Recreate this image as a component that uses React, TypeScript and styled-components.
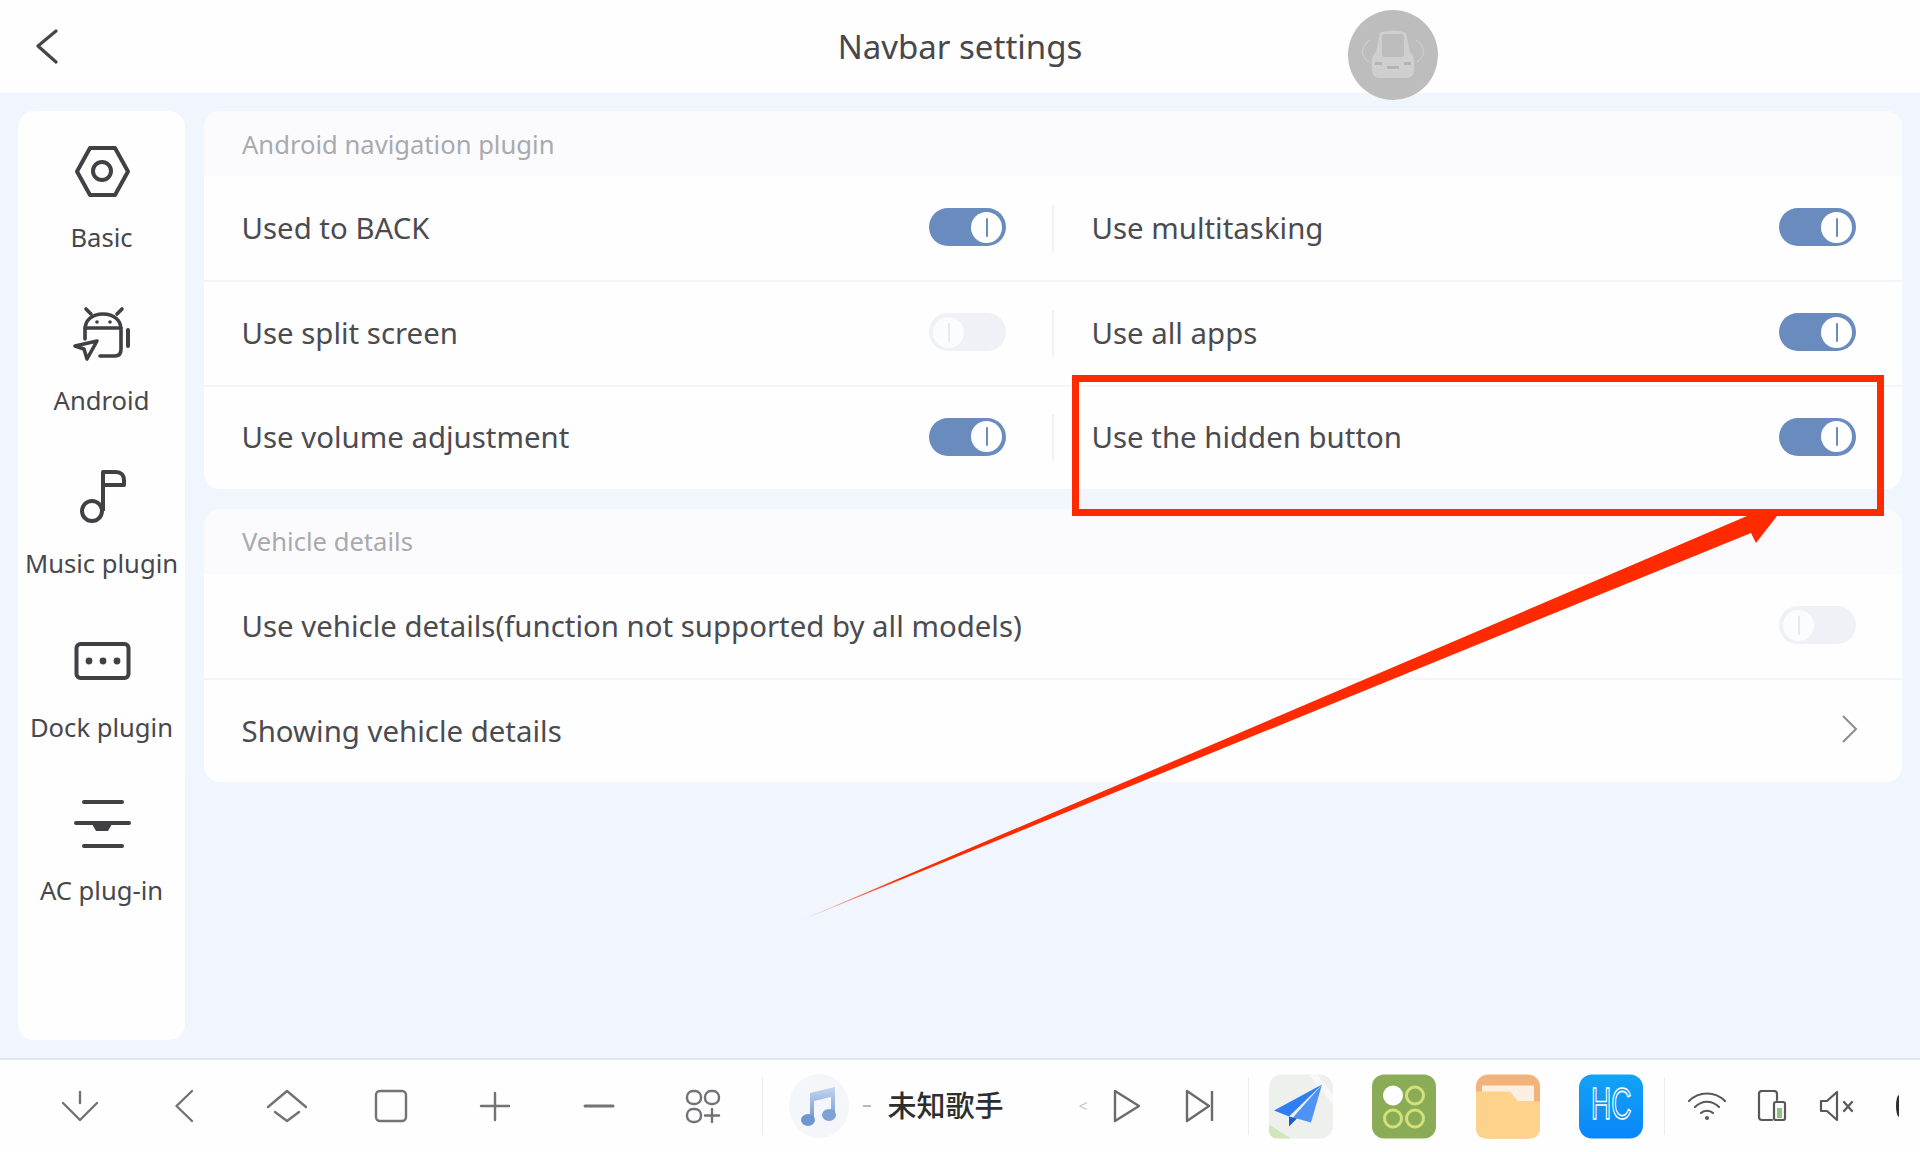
import React from "react";
import styled, { createGlobalStyle } from "styled-components";

const GlobalStyle = createGlobalStyle`
  html, body {
    margin: 0;
    padding: 0;
    background: #f1f5fd;
  }
  * {
    box-sizing: border-box;
  }
`;

const font = `"Noto Sans", "Noto Sans CJK SC", sans-serif`;

function BasicIcon() {
  return (
    <IconSvg viewBox="71 141 60 60">
      <path d="M76 171.5 L89 148 H114 L127 171.5 L114 195 H89 Z" fill="none" stroke="#404045" strokeWidth="4" strokeLinejoin="round" />
      <circle cx="101" cy="171" r="9" fill="none" stroke="#404045" strokeWidth="4" />
    </IconSvg>
  );
}

function AndroidIcon() {
  return (
    <IconSvg viewBox="71 305 60 60">
      <g fill="none" stroke="#404045" strokeWidth="3.6" strokeLinecap="round" strokeLinejoin="round">
        <path d="M84 340 V331 C84 321 91 315 102 315 C113 315 120 321 120 331 V350 C120 355 118 357 114 357 H99" />
        <path d="M84 329 H120" />
        <path d="M85 310 L90 315 M121 310 L116 315" />
        <path d="M127 331 V347" strokeWidth="4" />
        <path d="M74 347 L96 342 L86 360 L83 350 Z" />
      </g>
      <circle cx="96" cy="323" r="1.8" fill="#404045" />
      <circle cx="109" cy="323" r="1.8" fill="#404045" />
    </IconSvg>
  );
}

function MusicIcon() {
  return (
    <IconSvg viewBox="71 468 60 60">
      <g fill="none" stroke="#404045" strokeWidth="4" strokeLinejoin="round">
        <circle cx="91" cy="512" r="10" />
        <path d="M102 512 V473 H115 C120 473 123 476 123 481 V486 H102" />
      </g>
    </IconSvg>
  );
}

function DockIcon() {
  return (
    <IconSvg viewBox="71 631 60 60">
      <rect x="75.5" y="644" width="52" height="34" rx="4" fill="none" stroke="#404045" strokeWidth="4" />
      <circle cx="88" cy="661" r="3.4" fill="#404045" />
      <circle cx="102" cy="661" r="3.4" fill="#404045" />
      <circle cx="116" cy="661" r="3.4" fill="#404045" />
    </IconSvg>
  );
}

function AcIcon() {
  return (
    <IconSvg viewBox="71 794 60 60">
      <g stroke="#404045" strokeWidth="4" strokeLinecap="round">
        <path d="M83 802 H121" />
        <path d="M75 823 H128" />
        <path d="M83 846 H121" />
      </g>
      <path d="M91 824 H111 L107 831 H95 Z" fill="#404045" />
    </IconSvg>
  );
}

const menu = [
  { label: "Basic", icon: <BasicIcon /> },
  { label: "Android", icon: <AndroidIcon /> },
  { label: "Music plugin", icon: <MusicIcon /> },
  { label: "Dock plugin", icon: <DockIcon /> },
  { label: "AC plug-in", icon: <AcIcon /> },
];

const navIcons = [
  <path key="d" d="M20 6 V17 M3 17 L20 34 L37 17" />,
  <path key="b" d="M28 5 L12.5 20 L28 35" />,
  <path key="h" d="M1 21 L20 5 L39 21 M8 26 L20 35 L32 26" />,
  <rect key="r" x="5" y="5" width="30" height="30" rx="4" />,
  <path key="p" d="M6 20 H34 M20 7 V34" />,
  <path key="m" d="M6 20 H34" strokeWidth="3" />,
  <g key="g">
    <rect x="4" y="5" width="14" height="13" rx="6" />
    <rect x="22" y="5" width="14" height="13" rx="6" />
    <rect x="4" y="23" width="14" height="13" rx="6" />
    <path d="M22 29.5 H36 M29 23 V36" />
  </g>,
];

function Toggle({ on }: { on: boolean }) {
  return (
    <Track $on={on}>
      <Knob $on={on}>
        <KnobLine $on={on} />
      </Knob>
    </Track>
  );
}

export default function App() {
  return (
    <>
      <GlobalStyle />
      <Page>
        <Header>
          <BackButton viewBox="0 0 24 40">
            <path d="M22 3 L4 18 L22 34" fill="none" stroke="#45454a" strokeWidth="3.2" strokeLinecap="round" strokeLinejoin="round" />
          </BackButton>
          <Title>Navbar settings</Title>
          <span />
          <Avatar>
            <svg width="66" height="50" viewBox="0 0 66 50">
              <g fill="none" stroke="#cbcbcb" strokeWidth="1.5">
                <path d="M10 10 C0 17 0 26 9 32" />
                <path d="M56 10 C66 17 66 26 57 32" />
              </g>
              <path d="M20 3 C24 0 42 0 46 3 L50 22 C54 26 55 30 54 40 C54 46 50 48 46 48 H20 C16 48 12 46 12 40 C11 30 12 26 16 22 Z" fill="#cfcfcf" />
              <rect x="22" y="4" width="22" height="23" rx="2" fill="#bdbdbd" />
              <rect x="27" y="36" width="12" height="3" fill="#b4b4b4" />
              <rect x="15" y="32" width="7" height="3" fill="#b4b4b4" />
              <rect x="44" y="32" width="7" height="3" fill="#b4b4b4" />
            </svg>
          </Avatar>
        </Header>

        <Main>
          <Sidebar>
            {menu.map((m) => (
              <MenuItem key={m.label}>
                {m.icon}
                <MenuLabel>{m.label}</MenuLabel>
              </MenuItem>
            ))}
          </Sidebar>
          <Content>
            <Group>
              <GroupTitle>Android navigation plugin</GroupTitle>
              <Row>
                <Cell>
                  <RowText>Used to BACK</RowText>
                  <Toggle on />
                </Cell>
                <CellDivider />
                <Cell>
                  <RowText>Use multitasking</RowText>
                  <Toggle on />
                </Cell>
              </Row>
              <Row>
                <Cell>
                  <RowText>Use split screen</RowText>
                  <Toggle on={false} />
                </Cell>
                <CellDivider />
                <Cell>
                  <RowText>Use all apps</RowText>
                  <Toggle on />
                </Cell>
              </Row>
              <Row>
                <Cell>
                  <RowText>Use volume adjustment</RowText>
                  <Toggle on />
                </Cell>
                <CellDivider />
                <Cell>
                  <RowText>Use the hidden button</RowText>
                  <Toggle on />
                </Cell>
              </Row>
            </Group>
            <Group>
              <GroupTitle>Vehicle details</GroupTitle>
              <Row>
                <Cell>
                  <RowText>Use vehicle details(function not supported by all models)</RowText>
                  <Toggle on={false} />
                </Cell>
              </Row>
              <Row>
                <Cell>
                  <RowText>Showing vehicle details</RowText>
                  <RowChevron viewBox="0 0 24 32">
                    <path d="M7 2 L20 15 L7 28" />
                  </RowChevron>
                </Cell>
              </Row>
            </Group>
          </Content>
        </Main>

        <BottomBar>
          {navIcons.map((icon, i) => (
            <NavSlot key={i}>
              <NavSvg viewBox="0 0 40 40">{icon}</NavSvg>
            </NavSlot>
          ))}
          <NavEndDivider />
          <MusicSection>
            <MusicCover>
              <svg width="40" height="46" viewBox="0 0 40 42">
                <defs>
                  <linearGradient id="noteFill" x1="0" y1="0" x2="0" y2="1">
                    <stop offset="0" stopColor="#c3d6ee" />
                    <stop offset="1" stopColor="#6f97cf" />
                  </linearGradient>
                </defs>
                <path d="M11 8 L36 2 V30 H32 V12 L15 16 V36 H11 Z" fill="url(#noteFill)" />
                <ellipse cx="9" cy="35" rx="7" ry="6" fill="#6f97cf" />
                <ellipse cx="30" cy="30" rx="7" ry="6" fill="#7ea2d6" />
              </svg>
            </MusicCover>
            <Dash />
            <Artist>未知歌手</Artist>
            <FadedGlyph>&lt;</FadedGlyph>
            <PlayButton viewBox="0 0 32 40">
              <path d="M4 5 L28 20 L4 35 Z" />
            </PlayButton>
            <NextButton viewBox="0 0 32 40">
              <path d="M4 5 L26 20 L4 35 Z M29 5 V35" />
            </NextButton>
          </MusicSection>
          <BarDivider />
          <AppTray>
            <AppTile viewBox="0 0 64 64">
              <rect width="64" height="64" rx="13" fill="#eef0ed" />
              <path d="M0 50 L22 64 H8 C3 64 0 60 0 56 Z" fill="#cfe6bd" />
              <path d="M40 0 L64 30 V20 L48 0 Z" fill="#f8f8f8" />
              <path d="M53 10 L5 36 L20 42 Z" fill="#2f7ff0" />
              <path d="M53 10 L24 43 L42 48 Z" fill="#4f93f7" />
              <path d="M20 42 L20 52 L28 44 Z" fill="#1a5fc9" />
            </AppTile>
            <AppTile viewBox="0 0 64 64">
              <rect width="64" height="64" rx="12" fill="#8aac56" />
              <circle cx="21" cy="21" r="10" fill="#ffffff" />
              <circle cx="43" cy="21" r="8.5" fill="none" stroke="#d5e07a" strokeWidth="3" />
              <circle cx="21" cy="44" r="8.5" fill="none" stroke="#d5e07a" strokeWidth="3" />
              <circle cx="43" cy="44" r="8.5" fill="none" stroke="#d5e07a" strokeWidth="3" />
            </AppTile>
            <AppTile viewBox="0 0 64 64">
              <rect width="64" height="64" rx="12" fill="#f3b27a" />
              <path d="M6 11 H58 V27 H6 Z" fill="#fbeee2" />
              <path d="M0 17 H34 L42 27 H64 V54 C64 60 60 64 54 64 H10 C4 64 0 60 0 54 Z" fill="#fdd28a" />
            </AppTile>
            <AppTile viewBox="0 0 64 64">
              <defs>
                <linearGradient id="hcFill" x1="0" y1="0" x2="0" y2="1">
                  <stop offset="0" stopColor="#12a3f5" />
                  <stop offset="1" stopColor="#0a86fb" />
                </linearGradient>
              </defs>
              <rect width="64" height="64" rx="13" fill="url(#hcFill)" />
              <HcText x="12" y="28" transform="scale(1 1.6)">HC</HcText>
            </AppTile>
          </AppTray>
          <BarDivider />
          <StatusTray>
            <StatusSvg viewBox="0 0 40 32">
              <path d="M2 11 C12 1 28 1 38 11 M8 17 C15 10 25 10 32 17 M14 23 C17 20 23 20 26 23" />
              <circle cx="20" cy="28" r="2" fill="#58585c" stroke="none" />
            </StatusSvg>
            <StatusSvg viewBox="0 0 40 32">
              <path d="M20 30 H10 C8 30 7 29 7 27 V4 C7 2 8 1 10 1 H22 C24 1 25 2 25 4 V10" />
              <rect x="22" y="12" width="11" height="18" rx="2" />
              <rect x="25" y="18" width="5" height="10" fill="#8fc27a" stroke="none" />
            </StatusSvg>
            <StatusSvg viewBox="0 0 40 32">
              <path d="M4 11 H10 L20 2 V30 L10 21 H4 Z" />
              <path d="M27 12 L35 21 M35 12 L27 21" />
            </StatusSvg>
            <EdgeArc />
          </StatusTray>
        </BottomBar>

        <Highlight />
        <ArrowOverlay viewBox="0 0 1920 1152">
          <defs>
            <linearGradient id="arrowFade" gradientUnits="userSpaceOnUse" x1="797" y1="922" x2="900" y2="878">
              <stop offset="0" stopColor="#ff2a00" stopOpacity="0.1" />
              <stop offset="1" stopColor="#ff2a00" />
            </linearGradient>
          </defs>
          <path d="M797 922 L1747 516 H1777 L1756 543 L1751 533 Z" fill="url(#arrowFade)" />
        </ArrowOverlay>
      </Page>
    </>
  );
}

const Page = styled.div`
  position: relative;
  display: flex;
  flex-direction: column;
  width: 1920px;
  height: 1152px;
  overflow: hidden;
  background: #f1f5fd;
  font-family: ${font};
`;

const Header = styled.header`
  position: relative;
  display: grid;
  grid-template-columns: 1fr auto 1fr;
  align-items: center;
  height: 93px;
  padding-bottom: 2px;
  background: #fefefe;
`;

const BackButton = styled.svg`
  width: 24px;
  height: 40px;
  margin-left: 34px;
  margin-top: 4px;
`;

const Title = styled.h1`
  margin: 2px 0 0;
  font-size: 33px;
  font-weight: 400;
  color: #47474c;
`;

const Avatar = styled.div`
  position: absolute;
  left: 1348px;
  top: 10px;
  display: flex;
  align-items: center;
  justify-content: center;
  width: 90px;
  height: 90px;
  border-radius: 50%;
  background: #bdbdbd;
`;

const Main = styled.main`
  display: flex;
  flex: 1;
  gap: 19px;
  padding: 18px;
  min-height: 0;
`;

const Sidebar = styled.nav`
  flex: 0 0 167px;
  border-radius: 16px;
  background: #fefefe;
`;

const MenuItem = styled.div`
  display: flex;
  flex-direction: column;
  align-items: center;
  height: 163.2px;
  padding-top: 30px;
`;

const IconSvg = styled.svg`
  display: block;
  flex: 0 0 60px;
  width: 60px;
  height: 60px;
`;

const MenuLabel = styled.span`
  margin-top: 20px;
  font-size: 25.6px;
  line-height: 34px;
  color: #47474c;
  white-space: nowrap;
`;

const Content = styled.div`
  display: flex;
  flex: 1;
  flex-direction: column;
  gap: 20px;
`;

const Group = styled.section`
  overflow: hidden;
  border-radius: 16px;
  background: #fefefe;
`;

const GroupTitle = styled.div`
  display: flex;
  align-items: center;
  height: 65px;
  padding: 1px 0 0 38px;
  font-size: 25.6px;
  color: #a9a9ae;
  background: #fbfbfe;
`;

const Row = styled.div`
  display: flex;
  align-items: center;
  height: 104.3px;

  & + & {
    border-top: 2px solid #f2f5fa;
  }
`;

const Cell = styled.div`
  display: flex;
  flex: 1;
  align-items: center;
  justify-content: space-between;
  padding: 0 46px 0 37.5px;
`;

const CellDivider = styled.div`
  flex: 0 0 2px;
  height: 47px;
  background: #f0f2f6;
`;

const RowText = styled.span`
  margin-top: -1px;
  font-size: 29.4px;
  color: #4b4b50;
`;

const RowChevron = styled.svg`
  width: 24px;
  height: 32px;
  margin: -3px -4px 0 0;
  fill: none;
  stroke: #8c8c92;
  stroke-width: 2;
`;

const Track = styled.div<{ $on: boolean }>`
  position: relative;
  display: flex;
  align-items: center;
  justify-content: ${(p) => (p.$on ? "flex-end" : "flex-start")};
  width: 77px;
  height: 38px;
  margin-top: -2px;
  padding: 0 4px;
  border-radius: 19px;
  background: ${(p) => (p.$on ? "#6a8bbe" : "#eef1f5")};
`;

const Knob = styled.div<{ $on: boolean }>`
  display: flex;
  align-items: center;
  justify-content: center;
  width: 31px;
  height: 31px;
  border-radius: 50%;
  background: ${(p) => (p.$on ? "#ffffff" : "#fbfcfd")};
`;

const KnobLine = styled.div<{ $on: boolean }>`
  width: 2px;
  height: 19px;
  border-radius: 1px;
  background: ${(p) => (p.$on ? "#6a8bbe" : "#e6e9ee")};
`;

const BottomBar = styled.footer`
  display: flex;
  flex: 0 0 94px;
  align-items: center;
  padding-left: 28px;
  border-top: 2px solid #e3e6ea;
  background: #fefefe;
`;

const NavSlot = styled.div`
  display: flex;
  flex: 0 0 103.8px;
  align-items: center;
  justify-content: center;
`;

const NavSvg = styled.svg`
  width: 40px;
  height: 40px;
  fill: none;
  stroke: #727277;
  stroke-width: 2.4;
  stroke-linecap: round;
  stroke-linejoin: round;
`;

const BarDivider = styled.div`
  flex: 0 0 1px;
  height: 58px;
  background: #eceef1;
`;

const NavEndDivider = styled(BarDivider)`
  margin-left: 7px;
`;

const MusicSection = styled.div`
  display: flex;
  flex: 0 0 485px;
  align-items: center;
  padding-left: 26px;
`;

const MusicCover = styled.div`
  display: flex;
  flex: 0 0 60px;
  align-items: center;
  justify-content: center;
  height: 64px;
  border-radius: 50%;
  background: #f4f6f9;
`;

const Dash = styled.div`
  flex: 0 0 8px;
  height: 2px;
  margin: 0 17px 0 14px;
  background: #b9b9bd;
`;

const Artist = styled.span`
  flex: 0 0 115px;
  font-size: 29px;
  font-weight: 500;
  line-height: 40px;
  white-space: nowrap;
  color: #2e2e30;
`;

const FadedGlyph = styled.span`
  flex: 0 0 12px;
  margin-left: 75px;
  font-size: 16px;
  color: #c8c8cc;
`;

const PlayButton = styled.svg`
  flex: 0 0 32px;
  width: 32px;
  height: 40px;
  margin-left: 20px;
  fill: none;
  stroke: #6a6a6f;
  stroke-width: 2.4;
  stroke-linejoin: round;
`;

const NextButton = styled(PlayButton)`
  margin-left: 40px;
`;

const AppTray = styled.div`
  display: flex;
  flex: 0 0 415px;
  gap: 39.5px;
  padding-left: 20px;
`;

const AppTile = styled.svg`
  flex: 0 0 64px;
  width: 64px;
  height: 65px;
`;

const HcText = styled.text`
  font-family: "Liberation Sans", sans-serif;
  font-size: 28px;
  font-weight: 400;
  fill: none;
  stroke: #ffffff;
  stroke-width: 1;
`;

const StatusTray = styled.div`
  display: flex;
  flex: 1;
  align-items: center;
  gap: 25px;
  padding-left: 22px;
`;

const StatusSvg = styled.svg`
  flex: 0 0 40px;
  width: 40px;
  height: 32px;
  fill: none;
  stroke: #58585c;
  stroke-width: 2.2;
  stroke-linecap: round;
  stroke-linejoin: round;
`;

const EdgeArc = styled.div`
  flex: 0 0 6px;
  height: 22px;
  margin-left: 14px;
  border-left: 3px solid #2e2e30;
  border-radius: 50% 0 0 50%;
`;

const Highlight = styled.div`
  position: absolute;
  left: 1072px;
  top: 375px;
  width: 812px;
  height: 141px;
  border: 7px solid #ff2a00;
`;

const ArrowOverlay = styled.svg`
  position: absolute;
  left: 0;
  top: 0;
  width: 1920px;
  height: 1152px;
  pointer-events: none;
`;
